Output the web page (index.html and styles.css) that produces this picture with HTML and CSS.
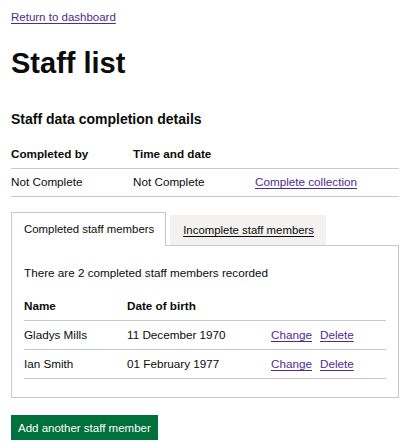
FILE: index.html
```html
<!DOCTYPE html>
<html lang="en">
<head>
<meta charset="utf-8">
<title>Staff list</title>
<link rel="stylesheet" href="styles.css">
</head>
<body>
<main class="page">
  <a class="link back" href="#">Return to dashboard</a>
  <h1 class="title">Staff list</h1>
  <h2 class="subtitle">Staff data completion details</h2>
  <table class="table summary">
    <thead>
      <tr><th class="c1">Completed by</th><th class="c2">Time and date</th><th></th></tr>
    </thead>
    <tbody>
      <tr><td>Not Complete</td><td>Not Complete</td><td><a class="link" href="#">Complete collection</a></td></tr>
    </tbody>
  </table>
  <div class="tabs">
    <ul class="tab-list">
      <li class="tab selected">Completed staff members</li>
      <li class="tab"><a class="tab-link" href="#">Incomplete staff members</a></li>
    </ul>
    <div class="panel">
      <p class="count">There are 2 completed staff members recorded</p>
      <table class="table staff">
        <thead>
          <tr><th class="s1">Name</th><th class="s2">Date of birth</th><th></th></tr>
        </thead>
        <tbody>
          <tr><td>Gladys Mills</td><td>11 December 1970</td><td><a class="link" href="#">Change</a><a class="link gap" href="#">Delete</a></td></tr>
          <tr><td>Ian Smith</td><td>01 February 1977</td><td><a class="link" href="#">Change</a><a class="link gap" href="#">Delete</a></td></tr>
        </tbody>
      </table>
    </div>
  </div>
  <button class="button" type="button">Add another staff member</button>
</main>
</body>
</html>
```
FILE: styles.css
```css
html, body {
  margin: 0;
  padding: 0;
  background: #ffffff;
}
body {
  font-family: "Liberation Sans", Arial, sans-serif;
  color: #0b0c0c;
  font-size: 11.7px;
}
.page {
  padding: 10px 17px 0 11px;
}
.link {
  color: #4c2c92;
  text-decoration: underline;
  text-underline-offset: 2px;
  text-decoration-thickness: 1px;
}
.back {
  display: inline-block;
  font-size: 11.5px;
  line-height: 15px;
}
.title {
  margin: 21px 0 0 0;
  font-size: 29px;
  line-height: 34px;
  font-weight: 700;
}
.subtitle {
  margin: 29px 0 0 0;
  font-size: 14px;
  line-height: 20px;
  font-weight: 700;
}
.table {
  border-collapse: collapse;
  width: 100%;
  font-size: 11.7px;
}
.table th, .table td {
  text-align: left;
  padding: 6px 0 7px 0;
  line-height: 14px;
  border-bottom: 1px solid #c6c8ca;
  vertical-align: top;
}
.table th {
  font-weight: 700;
}
.summary {
  margin-top: 12px;
}
.summary .c1, .summary .c2 {
  width: 122px;
}
.tabs {
  margin-top: 15px;
}
.tab-list {
  list-style: none;
  margin: 0;
  padding: 0;
  display: flex;
  align-items: flex-end;
  gap: 4px;
  position: relative;
  z-index: 1;
}
.tab {
  font-size: 11.4px;
  line-height: 14px;
  padding: 8px 12px 8px 13px;
  background: #f3f2f1;
}
.tab.selected {
  background: #ffffff;
  border: 1px solid #c6c8ca;
  border-bottom: 0;
  padding: 9px 11px 10px 12px;
  margin-bottom: -1px;
}
.tab-link {
  color: #0b0c0c;
  text-decoration: underline;
  text-underline-offset: 2px;
}
.panel {
  border: 1px solid #c6c8ca;
  padding: 19px 12px 18px 12px;
}
.count {
  margin: 0;
  line-height: 15px;
}
.staff {
  margin-top: 12px;
}
.staff th, .staff td {
  padding: 7px 0 7px 0;
}
.staff .s1 {
  width: 103px;
}
.staff .s2 {
  width: 144px;
}
.gap {
  margin-left: 8px;
}
.button {
  margin-top: 17px;
  font-family: "Liberation Sans", Arial, sans-serif;
  font-size: 11.5px;
  line-height: 14px;
  color: #ffffff;
  background: #00703c;
  border: 0;
  border-radius: 0;
  padding: 6px 7px 5px 7px;
  box-shadow: 0 2px 0 #002d18;
  cursor: pointer;
}
```
